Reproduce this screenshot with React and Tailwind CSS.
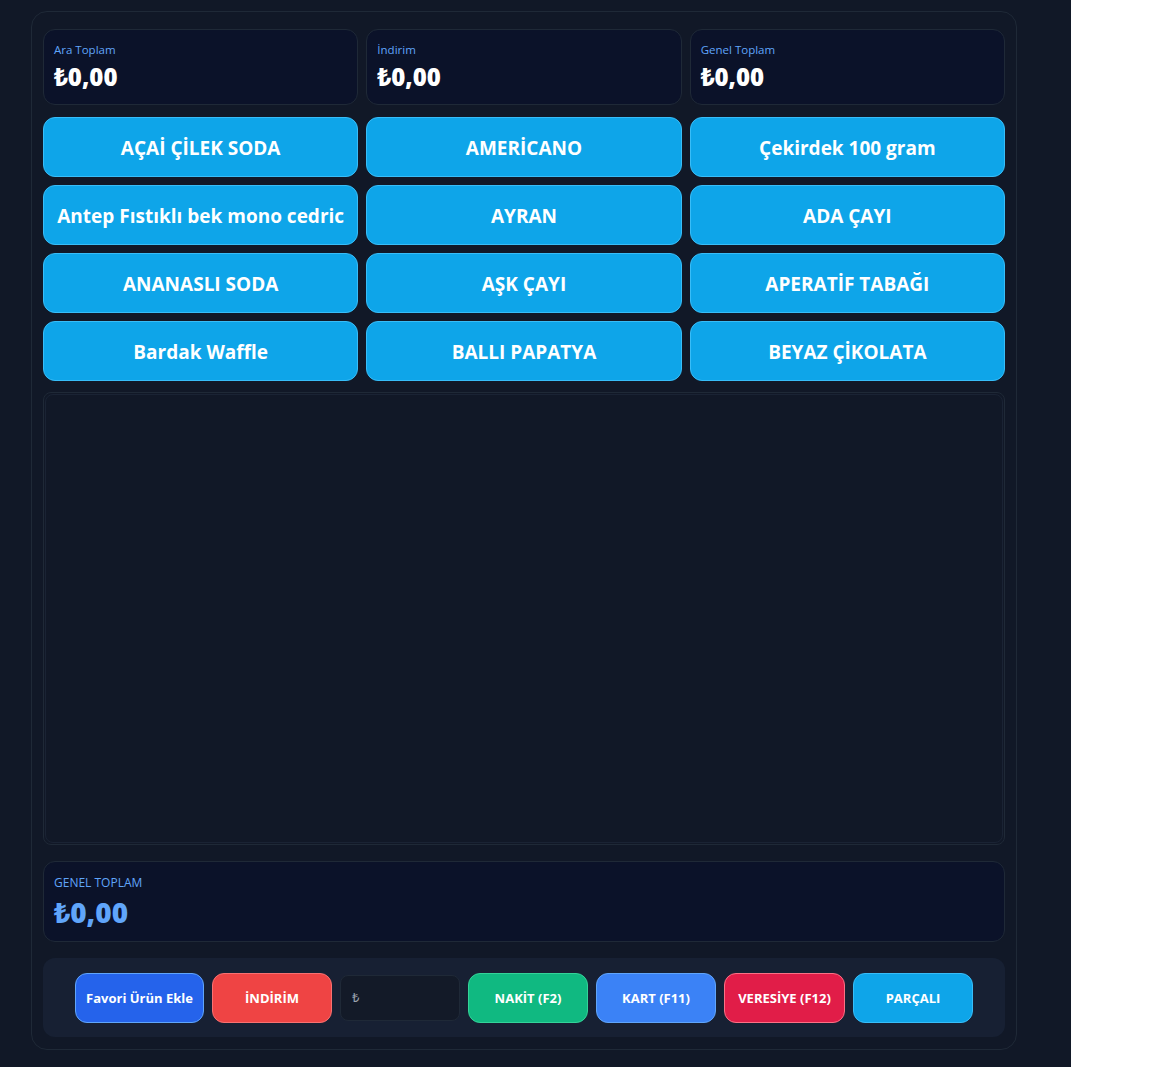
const summary = [
    { label: "Ara Toplam", value: "₺0,00" },
    { label: "İndirim", value: "₺0,00" },
    { label: "Genel Toplam", value: "₺0,00" },
];

const products = [
    "AÇAİ ÇİLEK SODA",
    "AMERİCANO",
    "Çekirdek 100 gram",
    "Antep Fıstıklı bek mono cedric",
    "AYRAN",
    "ADA ÇAYI",
    "ANANASLI SODA",
    "AŞK ÇAYI",
    "APERATİF TABAĞI",
    "Bardak Waffle",
    "BALLI PAPATYA",
    "BEYAZ ÇİKOLATA",
];

const ActionButton = ({ children, className }) => (
    <button className={`h-[50px] rounded-xl border pt-[3px] text-[13px] font-bold text-white ${className}`}>
        {children}
    </button>
);

export default function App() {
    return (
        <div
            className="w-[1071px] min-h-[1067px] bg-[#111827] pt-[11px] pl-[31px]"
            style={{ fontFamily: '"Open Sans", "Noto Sans", sans-serif' }}
        >
            <div className="w-[986px] rounded-2xl border border-[#1f2937] bg-[#111827] px-[11px] pt-[17px] pb-[12px]">
                {/* Summary cards */}
                <div className="grid grid-cols-3 gap-2">
                    {summary.map((s) => (
                        <div key={s.label} className="h-[76px] rounded-xl border border-[#1f2937] bg-[#0b1229] px-[10px] pt-[12px]">
                            <div className="text-[11.5px] leading-4 text-[#60a5fa]">{s.label}</div>
                            <div className="mt-[3px] text-[24px] font-extrabold leading-8 text-white">{s.value}</div>
                        </div>
                    ))}
                </div>

                {/* Product buttons */}
                <div className="mt-[12px] grid grid-cols-3 gap-2">
                    {products.map((p) => (
                        <button
                            key={p}
                            className="h-[60px] rounded-xl border border-[#38bdf8] bg-[#0ea5e9] pt-[2px] text-[19px] font-bold text-white"
                        >
                            {p}
                        </button>
                    ))}
                </div>

                {/* Cart area */}
                <div className="mt-[11px] h-[453px] rounded-lg border border-[#1f2937] bg-[#111827] p-px">
                    <div className="h-full rounded-lg border border-[#1a2334]" />
                </div>

                {/* Grand total */}
                <div className="mt-[16px] h-[81px] rounded-xl border border-[#1f2937] bg-[#0b1229] px-[10px] pt-[13px]">
                    <div className="text-[12px] leading-4 text-[#60a5fa]">GENEL TOPLAM</div>
                    <div className="mt-[3px] text-[28px] font-extrabold leading-9 text-[#60a5fa]">₺0,00</div>
                </div>

                {/* Payment bar */}
                <div className="mt-[16px] flex h-[79px] items-center justify-center gap-2 rounded-xl bg-[#172033]">
                    <ActionButton className="w-[129px] border-[#60a5fa] bg-[#2563eb]">Favori Ürün Ekle</ActionButton>
                    <ActionButton className="w-[120px] border-[#f87171] bg-[#ef4444]">İNDİRİM</ActionButton>
                    <div className="flex h-[46px] w-[120px] items-center rounded-lg border border-[#1f2937] bg-[#131a28] px-[11px] text-[13px] text-[#9ca3af]">
                        ₺
                    </div>
                    <ActionButton className="w-[120px] border-[#34d399] bg-[#10b981]">NAKİT (F2)</ActionButton>
                    <ActionButton className="w-[120px] border-[#60a5fa] bg-[#3b82f6]">KART (F11)</ActionButton>
                    <ActionButton className="w-[121px] border-[#fb7185] bg-[#e11d48]">VERESİYE (F12)</ActionButton>
                    <ActionButton className="w-[120px] border-[#38bdf8] bg-[#0ea5e9]">PARÇALI</ActionButton>
                </div>
            </div>
        </div>
    );
}
